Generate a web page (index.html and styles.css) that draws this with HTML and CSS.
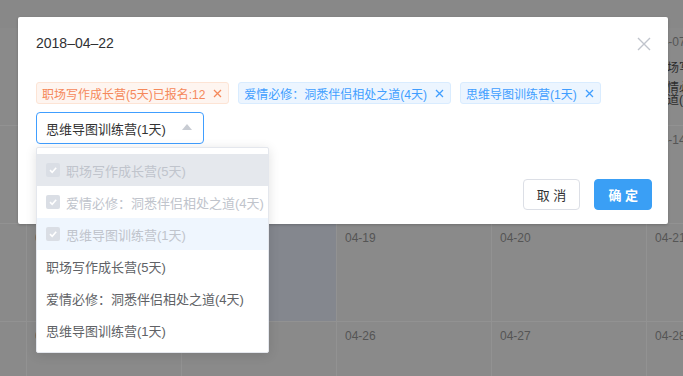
FILE: index.html
```html
<!DOCTYPE html>
<html lang="zh-CN">
<head>
    <meta charset="UTF-8">
    <title>课程日历</title>
    <link rel="stylesheet" href="styles.css">
</head>
<body>
    <!-- 日历（在遮罩下面） -->
    <div class="calendar">
        <div class="cell"><span class="day">04-02</span></div>
        <div class="cell"><span class="day">04-03</span></div>
        <div class="cell"><span class="day">04-04</span></div>
        <div class="cell"><span class="day">04-05</span></div>
        <div class="cell"><span class="day">04-06</span></div>
        <div class="cell">
            <span class="day">04-07</span>
            <p class="event">职场写作成长营(5天)</p>
            <p class="event">爱情必修：洞悉伴侣相处之道(4天)</p>
        </div>
        <div class="cell"><span class="day">04-09</span></div>
        <div class="cell"><span class="day">04-10</span></div>
        <div class="cell"><span class="day">04-11</span></div>
        <div class="cell"><span class="day">04-12</span></div>
        <div class="cell"><span class="day">04-13</span></div>
        <div class="cell"><span class="day">04-14</span></div>
        <div class="cell"><span class="day">04-16</span></div>
        <div class="cell"><span class="day">04-17</span></div>
        <div class="cell cell-active"><span class="day">04-18</span></div>
        <div class="cell"><span class="day">04-19</span></div>
        <div class="cell"><span class="day">04-20</span></div>
        <div class="cell"><span class="day">04-21</span></div>
        <div class="cell"><span class="day">04-23</span></div>
        <div class="cell"><span class="day">04-24</span></div>
        <div class="cell"><span class="day">04-25</span></div>
        <div class="cell"><span class="day">04-26</span></div>
        <div class="cell"><span class="day">04-27</span></div>
        <div class="cell"><span class="day">04-28</span></div>
    </div>

    <!-- 弹窗 -->
    <div class="dialog">
        <div class="dialog-header">
            <span class="dialog-title">2018–04–22</span>
            <span class="dialog-close">
                <svg width="14" height="14" viewBox="0 0 14 14">
                    <path d="M1 1L13 13M13 1L1 13" stroke="#c0c4cc" stroke-width="1.4" fill="none"/>
                </svg>
            </span>
        </div>
        <div class="dialog-body">
            <div class="tags">
                <span class="tag tag-warning">职场写作成长营(5天)已报名:12
                    <svg class="tag-close" width="9" height="9" viewBox="0 0 9 9"><path d="M1 1L8 8M8 1L1 8" stroke="currentColor" stroke-width="1.3"/></svg>
                </span>
                <span class="tag">爱情必修：洞悉伴侣相处之道(4天)
                    <svg class="tag-close" width="9" height="9" viewBox="0 0 9 9"><path d="M1 1L8 8M8 1L1 8" stroke="currentColor" stroke-width="1.3"/></svg>
                </span>
                <span class="tag">思维导图训练营(1天)
                    <svg class="tag-close" width="9" height="9" viewBox="0 0 9 9"><path d="M1 1L8 8M8 1L1 8" stroke="currentColor" stroke-width="1.3"/></svg>
                </span>
            </div>
            <div class="select">
                <div class="select-input">
                    <span>思维导图训练营(1天)</span>
                    <span class="select-arrow"></span>
                </div>
                <ul class="select-dropdown">
                    <li class="option disabled hover"><span class="checkbox"><svg width="10" height="10" viewBox="0 0 10 10"><path d="M2 5.2L4.2 7.3L8.2 2.8" stroke="#fff" stroke-width="1.6" fill="none"/></svg></span>职场写作成长营(5天)</li>
                    <li class="option disabled"><span class="checkbox"><svg width="10" height="10" viewBox="0 0 10 10"><path d="M2 5.2L4.2 7.3L8.2 2.8" stroke="#fff" stroke-width="1.6" fill="none"/></svg></span>爱情必修：洞悉伴侣相处之道(4天)</li>
                    <li class="option disabled selected"><span class="checkbox"><svg width="10" height="10" viewBox="0 0 10 10"><path d="M2 5.2L4.2 7.3L8.2 2.8" stroke="#fff" stroke-width="1.6" fill="none"/></svg></span>思维导图训练营(1天)</li>
                    <li class="option">职场写作成长营(5天)</li>
                    <li class="option">爱情必修：洞悉伴侣相处之道(4天)</li>
                    <li class="option">思维导图训练营(1天)</li>
                </ul>
            </div>
        </div>
        <div class="dialog-footer">
            <button class="btn">取 消</button>
            <button class="btn btn-primary">确 定</button>
        </div>
    </div>
</body>
</html>
```

FILE: styles.css
```css
html {
    overflow: hidden;
}
body {
    margin: 0;
    height: 376px;
    overflow: hidden;
    position: relative;
    background-color: #888888;
    font-family: "Liberation Sans", "Noto Sans CJK SC", sans-serif;
}
.calendar {
    display: grid;
    grid-template-columns: repeat(6, 155px);
    grid-auto-rows: 98px;
    margin-left: -128px;
    margin-top: 28px;
}
.cell {
    background-color: #8a8a8a;
    border-right: 1px solid #929292;
    border-bottom: 1px solid #929292;
    padding: 8px 8px 0 8px;
    font-size: 12px;
}
.cell-active {
    background-color: #84878e;
}
.day {
    display: block;
    color: #555;
    line-height: 12px;
}
.event {
    margin: 14px 0 0 0;
    color: #2c2c2c;
    line-height: 12px;
}
.event + .event {
    margin-top: 8px;
}

/* 弹窗 */
.dialog {
    position: absolute;
    left: 18px;
    top: 17px;
    width: 650px;
    height: 207px;
    box-sizing: border-box;
    background-color: #fff;
    border-radius: 2px;
    box-shadow: 0 1px 3px rgba(0, 0, 0, 0.2);
    display: flex;
    flex-direction: column;
    padding: 0 16px 14px 18px;
}
.dialog-header {
    display: flex;
    justify-content: space-between;
    align-items: center;
    padding-top: 18px;
}
.dialog-title {
    font-size: 14px;
    line-height: 16px;
    color: #303133;
}
.dialog-close {
    display: flex;
    margin-right: 1px;
    margin-top: 2px;
}
.dialog-body {
    margin-top: 31px;
}
.tags {
    display: flex;
    gap: 9px;
}
.tag {
    display: inline-flex;
    align-items: center;
    height: 22px;
    box-sizing: border-box;
    padding: 0 6px 0 5px;
    border: 1px solid #d9ecff;
    background-color: #ecf5ff;
    color: #409eff;
    font-size: 12px;
    border-radius: 3px;
    white-space: nowrap;
}
.tag-warning {
    border-color: #fde4d5;
    background-color: #fef5f0;
    color: #f5895b;
}
.tag-close {
    margin-left: 8px;
}
.select {
    position: relative;
    margin-top: 8px;
    width: 168px;
}
.select-input {
    height: 32px;
    box-sizing: border-box;
    border: 1px solid #409eff;
    border-radius: 4px;
    display: flex;
    align-items: center;
    justify-content: space-between;
    padding: 0 11px 0 9px;
    font-size: 13px;
    color: #333;
}
.select-arrow {
    width: 0;
    height: 0;
    border-left: 5px solid transparent;
    border-right: 5px solid transparent;
    border-bottom: 6px solid #c8ccd3;
    margin-top: -2px;
}
.select-dropdown {
    position: absolute;
    top: 35px;
    left: 0;
    width: 233px;
    box-sizing: border-box;
    margin: 0;
    padding: 6px 0;
    list-style: none;
    background-color: #fff;
    border: 1px solid #e4e7ed;
    border-radius: 2px;
    box-shadow: 0 2px 12px rgba(0, 0, 0, 0.12);
    z-index: 10;
}
.option {
    display: flex;
    align-items: center;
    height: 32px;
    padding-left: 9px;
    font-size: 13px;
    color: #606266;
    white-space: nowrap;
}
.option.disabled {
    color: #c0c4cc;
}
.option.hover {
    background-color: #e5e8ed;
}
.option.selected {
    background-color: #eff6fe;
}
.checkbox {
    width: 14px;
    height: 14px;
    border-radius: 2px;
    background-color: #dadee5;
    display: flex;
    align-items: center;
    justify-content: center;
    margin-right: 6px;
}
.dialog-footer {
    margin-top: auto;
    display: flex;
    justify-content: flex-end;
    gap: 14px;
}
.btn {
    height: 31px;
    box-sizing: border-box;
    padding: 0 13px;
    border: 1px solid #dcdfe6;
    border-radius: 4px;
    background-color: #fff;
    color: #303133;
    font-family: inherit;
    font-size: 13px;
    white-space: pre;
}
.btn-primary {
    border-color: #3a9ff5;
    background-color: #3a9ff5;
    color: #fff;
    font-weight: bold;
}
```
